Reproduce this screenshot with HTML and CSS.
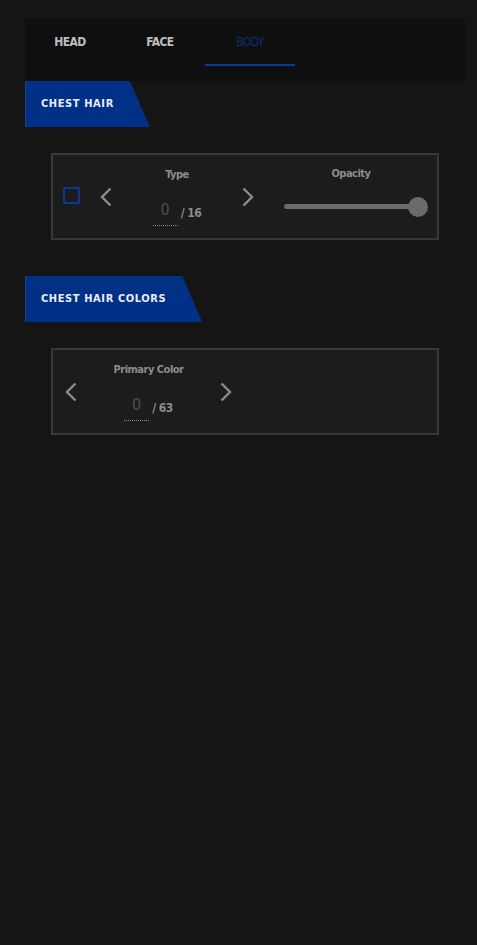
FILE: index.html
```html
<!DOCTYPE html>
<html>
<head>
<meta charset="utf-8">
<link rel="stylesheet" href="styles.css">
</head>
<body>
<div class="page">
  <nav class="tabs">
    <div class="tab">HEAD</div>
    <div class="tab">FACE</div>
    <div class="tab active">BODY</div>
  </nav>

  <div class="banner">CHEST HAIR</div>
  <div class="card">
    <div class="checkbox"></div>
    <div class="selector sel-type">
      <button class="chev"><svg viewBox="0 0 12 20" width="12" height="20"><path d="M10.5 1.5 L2 10 L10.5 18.5" /></svg></button>
      <div class="mid">
        <div class="label">Type</div>
        <div class="value"><span class="num">0</span><span class="total">/ 16</span></div>
      </div>
      <button class="chev"><svg viewBox="0 0 12 20" width="12" height="20"><path d="M1.5 1.5 L10 10 L1.5 18.5" /></svg></button>
    </div>
    <div class="opacity">
      <div class="label">Opacity</div>
      <div class="slider"><div class="track"></div><div class="thumb"></div></div>
    </div>
  </div>

  <div class="banner">CHEST HAIR COLORS</div>
  <div class="card card-nocheck">
    <div class="selector sel-color">
      <button class="chev"><svg viewBox="0 0 12 20" width="12" height="20"><path d="M10.5 1.5 L2 10 L10.5 18.5" /></svg></button>
      <div class="mid">
        <div class="label">Primary Color</div>
        <div class="value"><span class="num">0</span><span class="total">/ 63</span></div>
      </div>
      <button class="chev"><svg viewBox="0 0 12 20" width="12" height="20"><path d="M1.5 1.5 L10 10 L1.5 18.5" /></svg></button>
    </div>
  </div>
</div>
</body>
</html>
```

FILE: styles.css
```css
* { box-sizing: border-box; }
html, body {
  margin: 0;
  padding: 0;
  background: #151515;
  height: 100%;
}
body {
  font-family: "DejaVu Sans Condensed", "DejaVu Sans", sans-serif;
  font-stretch: condensed;
}
.page {
  padding: 18px 12px 0 25px;
}
.tabs {
  display: flex;
  height: 63px;
  background: #0f0f0f;
}
.tab {
  width: 90px;
  height: 48px;
  padding-top: 16px;
  text-align: center;
  font-size: 12px;
  font-weight: bold;
  line-height: 16px;
  color: #bdbdbd;
  letter-spacing: -0.6px;
}
.tab.active {
  color: #0b2c78;
  font-weight: normal;
  border-bottom: 2px solid #0a3a99;
}
.banner {
  display: block;
  width: fit-content;
  height: 46px;
  line-height: 46px;
  padding: 0 36px 0 15px;
  background: #003187;
  border-left: 1px solid #1d3f86;
  clip-path: polygon(0 0, calc(100% - 20px) 0, 100% 100%, 0 100%);
  color: #e8ecf5;
  font-size: 11px;
  font-weight: bold;
  letter-spacing: 0.6px;
}
.card {
  display: flex;
  align-items: center;
  width: 388px;
  height: 87px;
  margin: 26px 0 36px 26px;
  background: #1c1c1c;
  border: 2px solid #383838;
  padding-left: 10px;
}
.card-nocheck { padding-left: 12px; }
.checkbox {
  width: 17px;
  height: 17px;
  border: 2px solid #0a3a99;
  border-radius: 2px;
  margin-right: 20px;
  margin-top: -2px;
}
.selector {
  display: flex;
  align-items: center;
}
.chev {
  width: 12px;
  height: 20px;
  padding: 0;
  margin: 0;
  border: 0;
  background: none;
  display: block;
}
.chev svg { display: block; }
.chev path {
  fill: none;
  stroke: #8c8c8c;
  stroke-width: 2.4;
}
.mid {
  display: flex;
  flex-direction: column;
  align-items: center;
}
.sel-type .mid { width: 130px; }
.sel-color .mid { width: 143px; }
.label {
  font-size: 11px;
  font-weight: bold;
  line-height: 14px;
  color: #8c8c8c;
  letter-spacing: -0.5px;
}
.value {
  display: flex;
  align-items: flex-end;
  margin-top: 18px;
}
.num {
  width: 25px;
  text-align: center;
  font-size: 16px;
  line-height: 19px;
  color: #4e4e4e;
  border-bottom: 1px dotted #8a8a8a;
  padding-bottom: 6px;
}
.total {
  margin-left: 3px;
  font-size: 12px;
  font-weight: bold;
  line-height: 16px;
  color: #8c8c8c;
  letter-spacing: -0.5px;
  padding-bottom: 5px;
}
.opacity {
  width: 134px;
  margin-left: 30px;
  display: flex;
  flex-direction: column;
  align-items: center;
  margin-top: -17px;
}
.slider {
  position: relative;
  width: 134px;
  height: 5px;
  margin-top: 23px;
}
.track {
  height: 5px;
  border-radius: 3px;
  background: #6b6b6b;
}
.thumb {
  position: absolute;
  right: -10px;
  top: -7.5px;
  width: 20px;
  height: 20px;
  border-radius: 50%;
  background: #6b6b6b;
}
```
